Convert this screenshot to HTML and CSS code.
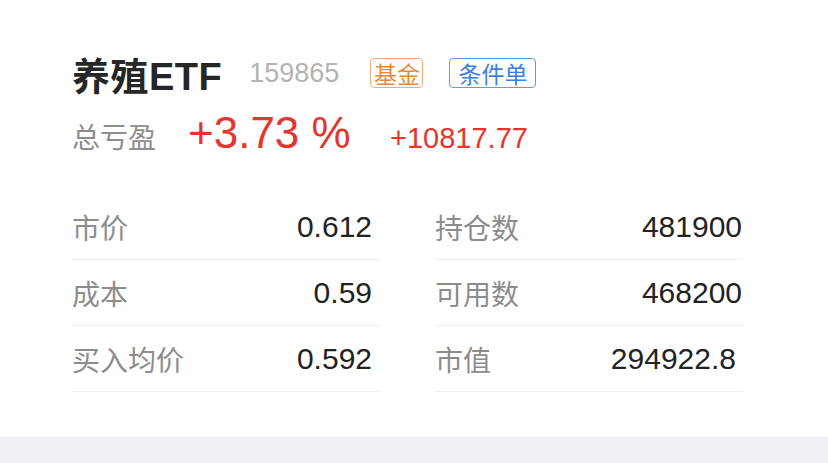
FILE: index.html
```html
<!DOCTYPE html>
<html lang="zh">
<head>
<meta charset="utf-8">
<link rel="stylesheet" href="styles.css">
</head>
<body>
<div class="card">
  <div class="title-row">
    <span class="name">养殖ETF</span>
    <span class="code">159865</span>
    <span class="tag tag-fund">基金</span>
    <span class="tag tag-cond">条件单</span>
  </div>
  <div class="pl-row">
    <span class="pl-label">总亏盈</span>
    <span class="pl-pct">+3.73 %</span>
    <span class="pl-amt">+10817.77</span>
  </div>
  <div class="grid">
    <div class="col col-left">
      <div class="row"><span class="label">市价</span><span class="value">0.612</span></div>
      <div class="row"><span class="label">成本</span><span class="value">0.59</span></div>
      <div class="row"><span class="label">买入均价</span><span class="value">0.592</span></div>
    </div>
    <div class="col col-right">
      <div class="row"><span class="label">持仓数</span><span class="value">481900</span></div>
      <div class="row"><span class="label">可用数</span><span class="value">468200</span></div>
      <div class="row"><span class="label">市值</span><span class="value value-inset">294922.8</span></div>
    </div>
  </div>
</div>
<div class="footer-band"></div>
</body>
</html>
```

FILE: styles.css
```css
html, body {
  margin: 0;
  padding: 0;
  background: #ffffff;
}
body {
  width: 828px;
  height: 463px;
  overflow: hidden;
  font-family: "Liberation Sans", "Noto Sans CJK SC", sans-serif;
}
.card {
  height: 437px;
  box-sizing: border-box;
  padding: 50px 0 0 72px;
}
.title-row {
  display: flex;
  align-items: center;
  height: 46px;
}
.name {
  font-size: 38px;
  font-weight: 600;
  color: #262626;
  letter-spacing: 0.5px;
}
.code {
  margin-left: 27px;
  font-size: 27px;
  color: #b3b3b3;
}
.tag {
  display: flex;
  align-items: center;
  justify-content: center;
  height: 30px;
  box-sizing: border-box;
  border: 1px solid;
  border-radius: 4px;
  font-size: 23px;
  font-family: "Noto Sans CJK SC", sans-serif;
  line-height: 1;
}
.tag-fund {
  margin-left: 31px;
  width: 53px;
  color: #e8893a;
  border-color: #efae78;
}
.tag-cond {
  margin-left: 26px;
  width: 87px;
  color: #3d7ee4;
  border-color: #6497e8;
}
.pl-row {
  display: flex;
  align-items: baseline;
  margin-top: 12px;
}
.pl-label {
  font-size: 28px;
  color: #8e8e8e;
  width: 116px;
}
.pl-pct {
  font-size: 44px;
  color: #e6352b;
  width: 202px;
}
.pl-amt {
  font-size: 29px;
  color: #e6352b;
}
.grid {
  display: grid;
  grid-template-columns: 308px 308px;
  column-gap: 55px;
  margin-top: 36px;
}
.row {
  display: flex;
  justify-content: space-between;
  align-items: center;
  height: 66px;
  box-sizing: border-box;
  border-bottom: 1px solid #efefef;
}
.label {
  font-size: 28px;
  color: #8c8c8c;
}
.value {
  font-size: 30px;
  color: #222222;
}
.col-left .value {
  padding-right: 8px;
}
.col-right .value {
  padding-right: 1px;
}
.col-right .value-inset {
  padding-right: 7px;
}
.footer-band {
  height: 26px;
  background: #f1f1f5;
}
```
